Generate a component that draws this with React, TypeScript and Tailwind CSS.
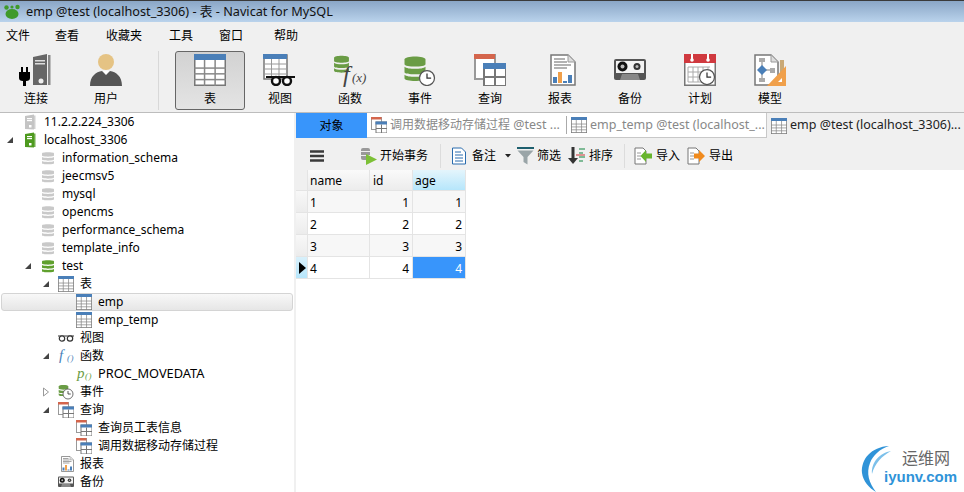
import type { ReactNode } from 'react';

const FONT = "font-['Noto_Sans','Noto_Sans_CJK_SC',sans-serif]";

function GridTable({ size = 16, head = '#4a7fb8' }: { size?: number; head?: string }) {
  const rows = [0.44, 0.62, 0.8];
  const cols = [0.33, 0.66];
  return (
    <svg width={size} height={size} viewBox="0 0 32 32" className="shrink-0">
      <rect x="0.75" y="0.75" width="30.5" height="30.5" fill="#fff" stroke="#777" strokeWidth="1.5" />
      <rect x="0" y="0" width="32" height="6" fill={head} />
      {rows.map((r) => (
        <line key={r} x1="0" x2="32" y1={r * 32} y2={r * 32} stroke="#888" strokeWidth="1.5" />
      ))}
      {cols.map((c) => (
        <line key={c} y1="6" y2="32" x1={c * 32} x2={c * 32} stroke="#888" strokeWidth="1.5" />
      ))}
    </svg>
  );
}

function Db({ size = 16, color = '#c9c9c9' }: { size?: number; color?: string }) {
  return (
    <svg width={size} height={size} viewBox="0 0 16 16" className="shrink-0">
      <path d="M2 3.2C2 1.8 14 1.8 14 3.2V5.6C14 7 2 7 2 5.6Z" fill={color} />
      <path d="M2 7C4 8.2 12 8.2 14 7V9.6C14 11 2 11 2 9.6Z" fill={color} />
      <path d="M2 11C4 12.2 12 12.2 14 11V13.2C14 14.6 2 14.6 2 13.2Z" fill={color} />
    </svg>
  );
}

function Server({ color }: { color: string }) {
  return (
    <svg width="16" height="16" viewBox="0 0 16 16" className="shrink-0">
      <path d="M3 2L12 0.5V15.5L3 15Z" fill={color} />
      <rect x="12" y="1.5" width="1.5" height="13.5" fill={color} opacity="0.8" />
      <rect x="5" y="4" width="5" height="1.2" fill="#fff" />
      <rect x="5" y="6" width="5" height="1.2" fill="#fff" />
      <rect x="7" y="11" width="2.5" height="2.5" fill="#fff" />
    </svg>
  );
}

function Clock({ x, y, r }: { x: number; y: number; r: number }) {
  return (
    <g>
      <circle cx={x} cy={y} r={r} fill="#fff" stroke="#555" strokeWidth={r / 6} />
      <path d={`M${x} ${y - r * 0.6}V${y}H${x + r * 0.55}`} fill="none" stroke="#333" strokeWidth={r / 6} />
    </g>
  );
}

function QueryIcon({ size = 16 }: { size?: number }) {
  return (
    <svg width={size} height={size} viewBox="0 0 16 16" className="shrink-0">
      <rect x="0.5" y="0.5" width="10" height="12" fill="#fff" stroke="#999" />
      <rect x="0" y="0" width="10.5" height="2.5" fill="#d4654c" />
      <rect x="5" y="5" width="11" height="11" fill="#fff" stroke="#777" />
      <rect x="4.5" y="4.5" width="11.5" height="3" fill="#4a7fb8" />
      <path d="M10.5 7.5V16M5 11.5H16" stroke="#777" fill="none" />
    </svg>
  );
}

function TapeIcon({ size = 16 }: { size?: number }) {
  return (
    <svg width={size} height={size} viewBox="0 0 32 32" className="shrink-0">
      <rect x="0" y="5" width="32" height="21" rx="2" fill="#555" />
      <rect x="2" y="7" width="28" height="12" fill="#f3f3f3" />
      <circle cx="8.5" cy="12.5" r="5" fill="#111" />
      <circle cx="8.5" cy="12.5" r="2" fill="#bbb" />
      <circle cx="23" cy="12.5" r="3.5" fill="#333" />
      <circle cx="23" cy="12.5" r="1.5" fill="#bbb" />
      <path d="M6 26L8 20H24L26 26Z" fill="#888" />
    </svg>
  );
}

function ReportIcon({ size = 16 }: { size?: number }) {
  return (
    <svg width={size} height={size} viewBox="0 0 32 32" className="shrink-0">
      <path d="M7 1H24L31 8V31H7Z" fill="#fff" stroke="#777" strokeWidth="1.5" />
      <path d="M24 1V8H31" fill="#ddd" stroke="#999" />
      <path d="M10 5H21M10 8H23M10 11H27M10 14H23" stroke="#666" strokeWidth="1.2" />
      <rect x="9" y="23" width="4" height="6" fill="#4a7fb8" />
      <rect x="14" y="18" width="4" height="11" fill="#f0a04b" />
      <rect x="19" y="27" width="4" height="2" fill="#4a7fb8" />
      <rect x="24" y="21" width="4" height="8" fill="#4a7fb8" />
    </svg>
  );
}

function ConnectIcon() {
  return (
    <svg width="34" height="32" viewBox="0 0 34 32">
      <path d="M14 3L28 0V31H14Z" fill="#666" />
      <rect x="29" y="1" width="2.5" height="30" fill="#888" />
      <rect x="16" y="6" width="10" height="1.5" fill="#ddd" />
      <rect x="16" y="9" width="10" height="1.5" fill="#ddd" />
      <circle cx="22" cy="27" r="2.5" fill="#eee" />
      <path d="M3 13V18M8 13V18" stroke="#000" strokeWidth="2" />
      <path d="M0 18H11V24Q11 27 7 27V32H4V27Q0 27 0 24Z" fill="#000" />
    </svg>
  );
}

function UserIcon() {
  return (
    <svg width="32" height="32" viewBox="0 0 32 32">
      <circle cx="16" cy="8" r="8" fill="#e5c384" />
      <path d="M0 32C0 22 6 18 12 17L16 21L20 17C26 18 32 22 32 32Z" fill="#555" />
      <path d="M12.5 16.5H19.5L16 20.5Z" fill="#fff" />
    </svg>
  );
}

function ViewIcon() {
  return (
    <svg width="34" height="32" viewBox="0 0 34 32">
      <rect x="1" y="1" width="23" height="24" fill="#fff" stroke="#777" strokeWidth="1.5" />
      <rect x="0" y="0" width="24" height="5" fill="#4a7fb8" />
      <path d="M1 10H24M1 15H24M1 20H24M8.5 5V25M16 5V25" stroke="#999" />
      <path d="M3 23H32" stroke="#111" strokeWidth="2" />
      <circle cx="13" cy="27" r="4" fill="#fff" stroke="#111" strokeWidth="2.4" />
      <circle cx="24" cy="27" r="4" fill="#fff" stroke="#111" strokeWidth="2.4" />
    </svg>
  );
}

function GreenDb({ width, height }: { width: number; height: number }) {
  return (
    <svg x="0" y="0" width={width} height={height} viewBox="0 0 16 16" preserveAspectRatio="none">
      <path d="M1 3C1 0.8 15 0.8 15 3V5.6C15 7.4 1 7.4 1 5.6Z" fill="#6a9c45" />
      <path d="M1 7C3 8.6 13 8.6 15 7V10C15 11.6 1 11.6 1 10Z" fill="#6a9c45" />
      <path d="M1 11.4C3 13 13 13 15 11.4V13.4C15 15.4 1 15.4 1 13.4Z" fill="#6a9c45" />
    </svg>
  );
}

function FuncIcon() {
  return (
    <svg width="34" height="32" viewBox="0 0 34 32" className="overflow-visible">
      <GreenDb width={17} height={20} />
      <text x="10" y="28" fontFamily="Liberation Serif" fontStyle="italic" fontSize="24" fill="#444">f</text>
      <text x="19" y="28" fontFamily="Liberation Serif" fontStyle="italic" fontSize="13" fill="#444">(x)</text>
    </svg>
  );
}

function EventIcon() {
  return (
    <svg width="34" height="32" viewBox="0 0 34 32">
      <GreenDb width={24} height={29} />
      <Clock x={24} y={24} r={7.5} />
    </svg>
  );
}

function CalendarIcon() {
  return (
    <svg width="32" height="32" viewBox="0 0 32 32">
      <rect x="0.75" y="0.75" width="30.5" height="30.5" fill="#fff" stroke="#777" strokeWidth="1.5" />
      <rect x="0" y="0" width="32" height="9" fill="#d0393f" />
      <path d="M8 0V6M24 0V6" stroke="#fff" strokeWidth="2" />
      <circle cx="8" cy="6" r="1.8" fill="#fff" />
      <circle cx="24" cy="6" r="1.8" fill="#fff" />
      <path d="M4 13H26M4 18H22M4 23H18M4 28H18M4 13V28M9 13V28M14 13V28M19 13V22M24 13V18" stroke="#aaa" />
      <Clock x={23} y={23} r={7.5} />
    </svg>
  );
}

function ModelIcon() {
  return (
    <svg width="32" height="32" viewBox="0 0 32 32">
      <path d="M1 1H17L24 8V31H1Z" fill="#fff" stroke="#777" strokeWidth="1.5" />
      <path d="M17 1V8H24" fill="#ddd" stroke="#999" />
      <rect x="5" y="4" width="6" height="4" fill="#aaa" />
      <rect x="5" y="24" width="6" height="4" fill="#aaa" />
      <rect x="16" y="14" width="5" height="5" fill="#aaa" />
      <path d="M8 8V24M12 16H16" stroke="#aaa" strokeWidth="1.5" />
      <path d="M8 11L13 16L8 21L3 16Z" fill="#4a7fb8" />
      <rect x="26" y="6" width="4" height="16" fill="#c9a875" />
      <path d="M32 12V32H13Z" fill="#f0a04b" />
      <path d="M28 24V28H24Z" fill="#fff" />
    </svg>
  );
}

function ToolButton({ label, icon, active }: { label: string; icon: ReactNode; active?: boolean }) {
  return (
    <div
      className={`w-[70px] h-[59px] flex flex-col items-center pt-[2px] rounded-[3px] shrink-0 ${
        active ? 'border border-[#666] bg-gradient-to-b from-[#d2d2d2] to-[#e4e4e4]' : 'border border-transparent'
      }`}
    >
      <div className="h-[32px] flex items-center justify-center">{icon}</div>
      <span className="text-[12px] leading-[18px] mt-[4px] text-black">{label}</span>
    </div>
  );
}

function Arrow({ open, hollow }: { open?: boolean; hollow?: boolean }) {
  if (hollow) {
    return (
      <svg width="8" height="10" viewBox="0 0 8 10" className="shrink-0 mr-[8px]">
        <path d="M1.5 1L6.5 5L1.5 9Z" fill="#fff" stroke="#999" />
      </svg>
    );
  }
  if (!open) return <span className="w-[8px] shrink-0 mr-[8px]" />;
  return (
    <svg width="8" height="8" viewBox="0 0 8 8" className="shrink-0 mr-[8px]">
      <path d="M7 1V7H1Z" fill="#444" />
    </svg>
  );
}

type TreeRow = {
  depth: number;
  label: string;
  icon: ReactNode;
  open?: boolean;
  hollow?: boolean;
  selected?: boolean;
  wide?: boolean;
};

const FuncSmall = ({ color, letter }: { color: string; letter: string }) => (
  <svg width="16" height="16" viewBox="0 0 16 16" className="shrink-0 overflow-visible">
    <text x="1" y="12" fontFamily="Liberation Serif" fontStyle="italic" fontSize="15" fill={color}>{letter}</text>
    <text x="9" y="13" fontFamily="Liberation Serif" fontStyle="italic" fontSize="9" letterSpacing="0.5" fill={color}>()</text>
  </svg>
);

const GlassesSmall = () => (
  <svg width="16" height="16" viewBox="0 0 16 16" className="shrink-0">
    <path d="M0 6H16" stroke="#333" />
    <circle cx="4" cy="8.5" r="2.7" fill="#fff" stroke="#333" strokeWidth="1.2" />
    <circle cx="12" cy="8.5" r="2.7" fill="#fff" stroke="#333" strokeWidth="1.2" />
  </svg>
);

const EventSmall = () => (
  <svg width="16" height="16" viewBox="0 0 16 16" className="shrink-0">
    <GreenDb width={11} height={13} />
    <Clock x={10} y={10} r={5} />
  </svg>
);

const grayDbs = ['information_schema', 'jeecmsv5', 'mysql', 'opencms', 'performance_schema', 'template_info'];

const TREE: TreeRow[] = [
  { depth: 1, label: '11.2.2.224_3306', icon: <Server color="#c4c4c4" /> },
  { depth: 1, label: 'localhost_3306', icon: <Server color="#4e9a1f" />, open: true },
  ...grayDbs.map((label) => ({ depth: 2, label, icon: <Db /> })),
  { depth: 2, label: 'test', icon: <Db color="#5fa02d" />, open: true },
  { depth: 3, label: '表', icon: <GridTable />, open: true },
  { depth: 4, label: 'emp', icon: <GridTable />, selected: true },
  { depth: 4, label: 'emp_temp', icon: <GridTable /> },
  { depth: 3, label: '视图', icon: <GlassesSmall /> },
  { depth: 3, label: '函数', icon: <FuncSmall color="#4a7fb8" letter="f" />, open: true },
  { depth: 4, label: 'PROC_MOVEDATA', icon: <FuncSmall color="#6a9c45" letter="p" />, wide: true },
  { depth: 3, label: '事件', icon: <EventSmall />, hollow: true },
  { depth: 3, label: '查询', icon: <QueryIcon />, open: true },
  { depth: 4, label: '查询员工表信息', icon: <QueryIcon /> },
  { depth: 4, label: '调用数据移动存储过程', icon: <QueryIcon /> },
  { depth: 3, label: '报表', icon: <ReportIcon /> },
  { depth: 3, label: '备份', icon: <TapeIcon /> },
];

const DEPTH_PAD: Record<number, string> = {
  1: 'pl-[6px]',
  2: 'pl-[24px]',
  3: 'pl-[42px]',
  4: 'pl-[60px]',
};

function Tree() {
  return (
    <div className="w-[294px] shrink-0 overflow-hidden">
      {TREE.map((row) => (
        <div
          key={row.label}
          className={`h-[18px] flex items-center text-black ${row.wide ? 'text-[12.8px]' : 'text-[12px]'} ${
            row.selected
              ? 'pl-[58px] rounded-[3px] border border-[#d4d4d4] bg-gradient-to-b from-[#f8f8f8] to-[#e6e6e6] ml-[1px] mr-[1px]'
              : DEPTH_PAD[row.depth]
          }`}
        >
          <Arrow open={row.open} hollow={row.hollow} />
          {row.icon}
          <span className="ml-[6px] whitespace-nowrap">{row.label}</span>
        </div>
      ))}
    </div>
  );
}

function Tab({ icon, current, children }: { icon: ReactNode; current?: boolean; children: ReactNode }) {
  return (
    <div
      className={`w-[199px] shrink-0 flex items-center gap-[3px] pl-[4px] text-[12.5px] whitespace-nowrap overflow-hidden ${
        current ? 'text-[#222] bg-[#f0f0f0]' : 'text-[#888] bg-white border-b border-[#c8c8c8]'
      }`}
    >
      {icon}
      <span>{children}</span>
    </div>
  );
}

function Sep() {
  return <span className="block w-px h-[24px] bg-[#dcdcdc] shrink-0" />;
}

function SubButton({ icon, label, className }: { icon: ReactNode; label: string; className: string }) {
  return (
    <div className={`flex items-center gap-[3px] shrink-0 text-[12px] text-black ${className}`}>
      {icon}
      <span>{label}</span>
    </div>
  );
}

function ObjectToolbar() {
  return (
    <div className="h-[32px] bg-[#f0f0f0] flex items-center shrink-0 pt-[4px]">
      <svg width="14" height="12" viewBox="0 0 14 12" className="ml-[14px] shrink-0">
        <path d="M0 1.5H14M0 6H14M0 10.5H14" stroke="#3a3a3a" strokeWidth="2.6" />
      </svg>
      <svg width="18" height="18" viewBox="0 0 18 18" className="ml-[36px] shrink-0">
        <rect x="1" y="1" width="9" height="12" rx="2" fill="#999" />
        <path d="M1 4.5H10M1 8.5H10" stroke="#eee" />
        <path d="M6 7L17 12.5L6 18Z" fill="#7cc036" />
      </svg>
      <span className="text-[12px] ml-[2px] mr-[12px] text-black">开始事务</span>
      <Sep />
      <SubButton
        className="ml-[10px]"
        label="备注"
        icon={
          <svg width="16" height="18" viewBox="0 0 16 18" className="mr-[2px]">
            <path d="M1.5 1H10.5L14.5 5V17H1.5Z" fill="#fff" stroke="#2a6cae" />
            <path d="M4 5H10M4 8H12M4 11H12M4 14H12" stroke="#2a6cae" />
          </svg>
        }
      />
      <svg width="6" height="4" viewBox="0 0 6 4" className="ml-[9px] mr-[6px] shrink-0">
        <path d="M0 0H6L3 3.5Z" fill="#222" />
      </svg>
      <SubButton
        className=""
        label="筛选"
        icon={
          <svg width="17" height="18" viewBox="0 0 17 18">
            <rect x="0" y="0" width="17" height="2" fill="#1e5f6e" />
            <path d="M0.5 3.5H16.5L10.5 10V17.5L6.5 15V10Z" fill="#9aa5a8" />
          </svg>
        }
      />
      <SubButton
        className="ml-[7px]"
        label="排序"
        icon={
          <svg width="18" height="18" viewBox="0 0 18 18">
            <path d="M5 0V12" stroke="#333" strokeWidth="3" />
            <path d="M0 11H10L5 17Z" fill="#333" />
            <path d="M11 2H17M11 6H15M11 10H17M11 14H15" stroke="#5aa878" strokeWidth="1.4" />
            <path d="M8 8H17" stroke="#c33" />
          </svg>
        }
      />
      <span className="ml-[11px] mr-[9px]">
        <Sep />
      </span>
      <SubButton
        className=""
        label="导入"
        icon={
          <svg width="18" height="18" viewBox="0 0 18 18" className="mr-[1px]">
            <path d="M1 1H9L12 4V17H1Z" fill="#fff" stroke="#777" />
            <path d="M3 6H7M3 9H7M3 12H7" stroke="#999" />
            <path d="M18 6.5H12V3L6.5 9L12 15V11.5H18Z" fill="#68b52d" />
          </svg>
        }
      />
      <SubButton
        className="ml-[7px]"
        label="导出"
        icon={
          <svg width="18" height="18" viewBox="0 0 18 18" className="mr-[1px]">
            <path d="M1 1H9L12 4V17H1Z" fill="#fff" stroke="#777" />
            <path d="M3 6H7M3 9H7M3 12H7" stroke="#999" />
            <path d="M7 6.5H12V3L18 9L12 15V11.5H7Z" fill="#f08a1d" />
          </svg>
        }
      />
    </div>
  );
}

const ROWS = [1, 2, 3, 4];

function DataGrid() {
  return (
    <div className="grid grid-cols-[12px_62px_43px_53px] grid-rows-[21px_22px_22px_22px_22px] w-[170px] text-[12px] text-black">
      <div className="bg-[#f0f0f0] border-r border-b border-[#e4e4e4]" />
      <div className="bg-gradient-to-b from-[#fafafa] to-[#ececec] border-r border-b border-[#e4e4e4] pl-[2px] leading-[22px]">name</div>
      <div className="bg-gradient-to-b from-[#fafafa] to-[#ececec] border-r border-b border-[#e4e4e4] pl-[3px] leading-[22px]">id</div>
      <div className="bg-gradient-to-b from-[#e4f5fc] to-[#b6e6fb] border-r border-b border-[#e4e4e4] pl-[2px] leading-[22px]">age</div>
      {ROWS.map((n) => {
        const stripe = n % 2 === 1 ? 'bg-[#f7f7f7]' : 'bg-white';
        const last = n === 4;
        return (
          <div key={n} className="contents">
            <div
              className={`border-r border-b border-[#e4e4e4] flex items-center ${
                last ? 'bg-gradient-to-b from-[#d8f0fb] to-[#b6e6fb]' : 'bg-gradient-to-b from-[#f8f8f8] to-[#ececec]'
              }`}
            >
              {last && (
                <svg width="8" height="12" viewBox="0 0 8 12" className="ml-[3px]">
                  <path d="M0 0L7 6L0 12Z" fill="#000" />
                </svg>
              )}
            </div>
            <div className={`${stripe} border-r border-b border-[#e4e4e4] pl-[2px] leading-[23px]`}>{n}</div>
            <div className={`${stripe} border-r border-b border-[#e4e4e4] pr-[3px] text-right leading-[23px]`}>{n}</div>
            <div
              className={`border-r border-b border-[#e4e4e4] pr-[3px] text-right leading-[23px] ${
                last ? 'bg-[#3895fb] text-white' : stripe
              }`}
            >
              {n}
            </div>
          </div>
        );
      })}
    </div>
  );
}

function Watermark() {
  return (
    <div className="absolute left-[860px] top-[445px] w-[104px] h-[47px]">
      <svg width="32" height="47" viewBox="0 0 32 47" className="absolute left-0 top-0">
        <path d="M29 1C11 2 1 14 2 28C3 36 9 43 16 47C9 38 6 28 10 18C13 10 20 4 29 1Z" fill="#2f93d8" />
        <path d="M31 6C20 8 11 17 12 29C15 18 22 11 31 6Z" fill="#7cc0ea" />
      </svg>
      <span className="absolute left-[42px] top-[4px] text-[16px] leading-[18px] text-[#666] whitespace-nowrap">运维网</span>
      <span className="absolute left-[24px] top-[23px] text-[15px] leading-[18px] font-bold text-[#2f93d8] whitespace-nowrap font-['Liberation_Sans',sans-serif]">
        iyunv.com
      </span>
    </div>
  );
}

export default function App() {
  return (
    <div className={`relative w-[964px] h-[492px] overflow-hidden bg-white flex flex-col ${FONT}`}>
      <div className="h-[22px] shrink-0 bg-gradient-to-b from-[#8aa6c6] to-[#bad3ec] border-t border-[#3a3a3a] flex items-center">
        <svg width="18" height="16" viewBox="0 0 18 16" className="ml-[3px] shrink-0">
          <ellipse cx="9" cy="10" rx="6.5" ry="5" fill="#3f9a2a" />
          <circle cx="3.5" cy="3.5" r="2.2" fill="#3f9a2a" />
          <circle cx="14.5" cy="3" r="2.2" fill="#3f9a2a" />
          <circle cx="9" cy="3" r="1.6" fill="#3f9a2a" />
        </svg>
        <span className="ml-[5px] text-[12.7px] text-[#111] whitespace-nowrap">emp @test (localhost_3306) - 表 - Navicat for MySQL</span>
      </div>

      <div className="h-[27px] shrink-0 bg-[#f0f0f0] flex items-center text-[12px] text-black">
        <span className="ml-[6px] w-[49px]">文件</span>
        <span className="w-[51px]">查看</span>
        <span className="w-[63px]">收藏夹</span>
        <span className="w-[50px]">工具</span>
        <span className="w-[55px]">窗口</span>
        <span>帮助</span>
      </div>

      <div className="h-[64px] shrink-0 bg-[#f0f0f0] border-b border-[#bdbdbd] flex items-start pt-[2px]">
        <div className="ml-px flex">
          <ToolButton label="连接" icon={<ConnectIcon />} />
          <ToolButton label="用户" icon={<UserIcon />} />
        </div>
        <span className="w-px h-[59px] bg-[#d8d8d8] ml-[17px] mr-[16px] shrink-0" />
        <ToolButton label="表" active icon={<GridTable size={32} />} />
        <ToolButton label="视图" icon={<ViewIcon />} />
        <ToolButton label="函数" icon={<FuncIcon />} />
        <ToolButton label="事件" icon={<EventIcon />} />
        <ToolButton label="查询" icon={<QueryIcon size={32} />} />
        <ToolButton label="报表" icon={<ReportIcon size={32} />} />
        <ToolButton label="备份" icon={<TapeIcon size={32} />} />
        <ToolButton label="计划" icon={<CalendarIcon />} />
        <ToolButton label="模型" icon={<ModelIcon />} />
      </div>

      <div className="flex-1 flex min-h-0">
        <Tree />
        <div className="w-[2px] shrink-0 bg-[#f0f0f0]" />
        <div className="flex-1 flex flex-col min-w-0">
          <div className="h-[25px] shrink-0 flex bg-[#f0f0f0]">
            <div className="w-[71px] shrink-0 bg-[#3895fb] flex items-center justify-center text-[12px] text-black">对象</div>
            <Tab icon={<QueryIcon />}>
              <span className="text-[12px]">调用数据移动存储过程</span> @test ...
            </Tab>
            <div className="w-px shrink-0 bg-white border-b border-[#c8c8c8] flex items-center">
              <span className="block w-px h-[18px] bg-[#aaa]" />
            </div>
            <Tab icon={<GridTable />}>emp_temp @test (localhost_...</Tab>
            <span className="w-px shrink-0 bg-[#c8c8c8]" />
            <Tab icon={<GridTable />} current>
              emp @test (localhost_3306)...
            </Tab>
          </div>
          <ObjectToolbar />
          <DataGrid />
        </div>
      </div>

      <Watermark />
    </div>
  );
}
